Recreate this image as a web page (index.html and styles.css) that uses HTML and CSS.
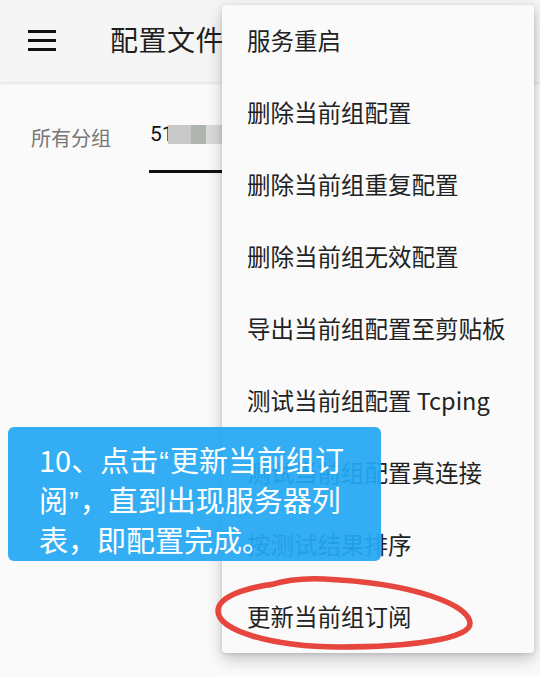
FILE: index.html
```html
<!DOCTYPE html>
<html lang="zh-CN">
<head>
<meta charset="utf-8">
<link rel="stylesheet" href="styles.css">
</head>
<body>
<div class="screen">
  <header class="appbar">
    <div class="menu-btn">
      <svg width="28" height="22" viewBox="0 0 28 22"><rect x="0" y="1" width="28" height="3" fill="#111"/><rect x="0" y="10" width="28" height="3" fill="#111"/><rect x="0" y="19" width="28" height="3" fill="#111"/></svg>
    </div>
    <h1 class="title">配置文件</h1>
  </header>
  <nav class="tabs">
    <div class="tab">所有分组</div>
    <div class="tab active">
      <span class="tab-text">51</span>
      <span class="blur"><i class="b1"></i><i class="b2"></i><i class="b3"></i></span>
    </div>
  </nav>

  <ul class="popup">
    <li>服务重启</li>
    <li>删除当前组配置</li>
    <li>删除当前组重复配置</li>
    <li>删除当前组无效配置</li>
    <li>导出当前组配置至剪贴板</li>
    <li>测试当前组配置 Tcping</li>
    <li>测试当前组配置真连接</li>
    <li>按测试结果排序</li>
    <li>更新当前组订阅</li>
  </ul>

  <div class="note">10、点击<span class="q">“</span>更新当前组订<br>阅<span class="q">”</span>，直到出现服务器列<br>表，即配置完成。</div>

  <svg class="circle" width="270" height="90" viewBox="0 0 270 90">
    <path d="M60 9 C 30 13, 4 22, 4 36 C 4 56, 60 72, 125 72 C 195 72, 257 64, 256 48 C 255 30, 200 8, 110 4 C 90 3, 72 5, 56 10" fill="none" stroke="#e6463d" stroke-width="5.5" stroke-linecap="round"/>
  </svg>
</div>
</body>
</html>
```
FILE: styles.css
```css
* { box-sizing: border-box; margin: 0; padding: 0; }
html, body { width: 540px; height: 677px; overflow: hidden; }
body {
  background: #fafafa;
  font-family: "Noto Sans CJK SC", "Noto Sans", Roboto, sans-serif;
  color: #212121;
}
.screen { position: relative; width: 540px; height: 677px; }
.appbar {
  height: 82px;
  background: #f5f5f5;
  display: flex;
  align-items: center;
  padding-left: 28px;
  box-shadow: 0 1px 3px rgba(0,0,0,0.12);
}
.menu-btn { display: flex; width: 28px; height: 22px; margin-top: -3px; }
.title {
  margin-left: 54px;
  font-size: 28px;
  font-weight: 400;
  color: #1e1e1e;
  margin-top: -4px;
  letter-spacing: 0.5px;
}
.tabs {
  display: flex;
  height: 92px;
  padding-left: 31px;
  align-items: stretch;
}
.tab {
  font-size: 20px;
  color: #767676;
  display: flex;
  align-items: center;
  padding-top: 18px;
}
.tab.active {
  margin-left: 38px;
  color: #111;
  font-family: Roboto, "Noto Sans CJK SC", sans-serif;
  border-bottom: 3px solid #111;
  width: 80px;
  padding-left: 1px;
  padding-top: 16px;
  margin-bottom: 1px;
}
.tab-text { font-size: 21px; }
.blur { display: flex; height: 19px; margin-left: -6px; }
.blur i { display: block; height: 19px; }
.blur .b1 { width: 23px; background: #c9c9c9; }
.blur .b2 { width: 15px; background: #aeb4ae; }
.blur .b3 { width: 16px; background: #d9d9d9; }

.popup {
  position: absolute;
  left: 222px;
  top: 5px;
  width: 312px;
  list-style: none;
  background: #fafafa;
  border-radius: 4px;
  box-shadow: 0 6px 16px rgba(0,0,0,0.22), 0 1px 4px rgba(0,0,0,0.12);
}
.popup li {
  height: 72px;
  display: flex;
  align-items: center;
  padding-left: 25px;
  font-size: 23.5px;
  color: #222;
  padding-bottom: 2px;
}
.note {
  position: absolute;
  left: 8px;
  top: 427px;
  width: 373px;
  height: 134px;
  background: rgba(36, 168, 244, 0.93);
  border-radius: 6px;
  color: #fff;
  font-family: "Noto Sans CJK SC", sans-serif;
  font-size: 29px;
  line-height: 37px;
  padding: 14px 0 0 31px;
  white-space: nowrap;
}
.note .q {
  font-family: "Liberation Sans", "DejaVu Sans", sans-serif;
  margin: 0 1px;
}
.circle {
  position: absolute;
  left: 214px;
  top: 575px;
}
```
